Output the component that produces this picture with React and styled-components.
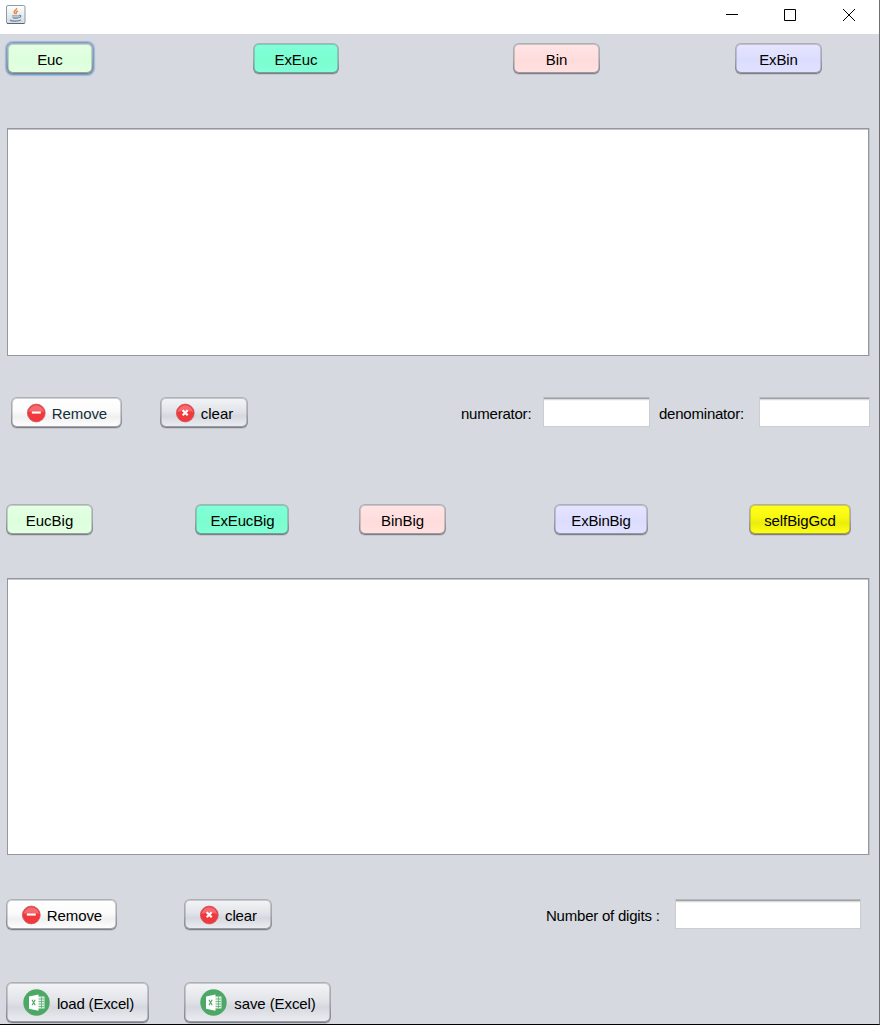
import React from "react";
import styled, { createGlobalStyle } from "styled-components";

const Global = createGlobalStyle`
  * { box-sizing: border-box; }
  html, body { margin: 0; padding: 0; }
  body { width: 880px; height: 1025px; overflow: hidden; font-family: "Liberation Sans", Arial, sans-serif; }
`;

const Window = styled.main`
  width: 880px;
  height: 1025px;
  display: flex;
  flex-direction: column;
  background: #d6d9df;
  border-right: 1px solid #6d6f75;
  border-bottom: 1px solid #000;
`;

const TitleBar = styled.header`
  height: 34px;
  flex: none;
  background: #fff;
  display: flex;
  justify-content: space-between;
  align-items: flex-start;
  padding: 4px 23px 0 5px;
`;

const Controls = styled.div`
  display: flex;
  gap: 46px;
  padding-top: 5px;
  svg { display: block; }
`;

const Row = styled.section`
  display: flex;
  flex: none;
  align-items: flex-start;
  height: ${(p) => p.$h}px;
  margin-top: ${(p) => p.$top}px;
`;

const tones = {
  green: "#e5ffe5, #dcffdc 55%, #e4ffe2",
  mint: "#82ffd8, #7bfdd0 55%, #82ffd6",
  pink: "#ffe5e5, #ffdcdc 55%, #ffe0e0",
  lilac: "#e6e6ff, #dcdcff 55%, #e1e1ff",
  yellow: "#ffff1c, #f8f810 40%, #eded0c 62%, #ffff18",
  white: "#ffffff, #fbfbfb 45%, #f0f0f1 65%, #ffffff",
  silver: "#f3f4f6, #e2e4e9 45%, #d5d8df 62%, #eceef2",
};

const Button = styled.button`
  width: ${(p) => p.$w}px;
  height: ${(p) => p.$h || 31}px;
  margin: 0 0 0 ${(p) => p.$gap}px;
  padding: 1px 0 0 ${(p) => p.$nudge || 0}px;
  flex: none;
  display: flex;
  align-items: center;
  justify-content: center;
  gap: 6px;
  border: 1px solid transparent;
  border-radius: 6px;
  background:
    linear-gradient(${(p) => tones[p.$tone]}) padding-box,
    linear-gradient(#adb0b5, #a4a7ac 50%, #7b7e85) border-box;
  box-shadow:
    inset 0 0 0 1px rgba(100, 104, 112, 0.3),
    inset 0 -1px 0 rgba(70, 74, 82, 0.35),
    ${(p) => (p.$focus ? "0 0 0 1px #739fce, 0 0 1px 2px rgba(115, 159, 206, 0.55)" : "0 1px 0 #c3c6cc")};
  color: ${(p) => p.$color || "#000"};
  font: 15px "Liberation Sans", Arial, sans-serif;
  letter-spacing: ${(p) => p.$track || 0}px;
  white-space: nowrap;
  svg { flex: none; display: block; }
`;

const Output = styled.div`
  width: 862px;
  flex: none;
  height: ${(p) => p.$h}px;
  margin: ${(p) => p.$top}px 0 0 7px;
  background: #fff;
  border: 1px solid #9297a1;
  box-shadow: 1px 0 0 #bfc2ca, inset 0 1px 0 #c3c5cb;
`;

const Label = styled.label`
  margin-left: ${(p) => p.$gap}px;
  width: ${(p) => p.$w}px;
  flex: none;
  line-height: 33px;
  font-size: 15px;
  letter-spacing: -0.22px;
  white-space: nowrap;
  color: #000;
`;

const Field = styled.input`
  width: ${(p) => p.$w}px;
  height: 30px;
  flex: none;
  margin: 0;
  padding: 0 6px;
  background: linear-gradient(#a0a2a6 0 1px, #d9dadc 1px 2px, #f5f5f5 2px 3px, #fff 3px) padding-box #fff;
  border: 1px solid #cbcdd1;
  border-top-color: #b5b8bd;
  outline: none;
`;

function JavaIcon() {
  return (
    <svg width="21" height="21" viewBox="0 0 21 21">
      <defs>
        <linearGradient id="cupBack" x1="0" y1="0" x2="0" y2="1">
          <stop offset="0" stopColor="#fff" />
          <stop offset="1" stopColor="#d6dade" />
        </linearGradient>
      </defs>
      <rect x="1.5" y="1.5" width="18.5" height="18" rx="1.5" fill="url(#cupBack)" stroke="#8b9ba7" />
      <path d="M2 19.5h17.5" stroke="#4e6b80" />
      <path d="M11.6 4c.4 2.2-3.2 2.6-2.4 4.6l1 1.6M12.9 7c-1.9.7-2.2 1.7-1.3 3" fill="none" stroke="#ec8b4a" strokeWidth="1.5" />
      <path d="M6.8 11.2h7.4l-.8 3.2q-2.8 1-5.6 0z" fill="#8ba3b5" />
      <path d="M7.4 12.6h6" stroke="#d8e0e6" strokeWidth=".7" />
      <path d="M14.2 11.4c2.3-.5 2.1 1.9-.5 2.3M5 16c1.5 1.4 9 1.4 11 0" fill="none" stroke="#67879f" strokeWidth="1.2" />
    </svg>
  );
}

function RedIcon({ cross }) {
  return (
    <svg width="20" height="20" viewBox="0 0 20 20">
      <circle cx="10.3" cy="10" r="8.9" fill="#f2383c" stroke="#c45a61" strokeWidth=".8" />
      <path d="M2.5 9a7.9 7.9 0 0 1 15.6 0q-7.8-2.5-15.6 0z" fill="#f4777a" opacity=".8" />
      {cross ? (
        <path d="M7.7 7.2l5 5M12.7 7.2l-5 5" stroke="#fff" strokeWidth="2.2" />
      ) : (
        <path d="M5.8 9.5h9" stroke="#fff" strokeWidth="2.2" />
      )}
    </svg>
  );
}

function ExcelIcon() {
  return (
    <svg width="28" height="28" viewBox="0 0 28 28">
      <circle cx="13.5" cy="13.5" r="13.2" fill="#4da765" />
      <path d="M15 7.5h6.5v12H15z" fill="#dff0e3" />
      <path d="M15 10h6M15 12.5h6M15 15h6M15 17.5h6M18.5 8v11" stroke="#4da765" strokeWidth=".7" />
      <path d="M6 7.5l9.5-2v16.2L6 19.8z" fill="#fff" />
      <path d="M9 10.8l3.2 5.4M12.2 10.8L9 16.2" stroke="#4da765" strokeWidth="1.2" />
    </svg>
  );
}

export default function App() {
  return (
    <>
      <Global />
      <Window>
        <TitleBar>
          <JavaIcon />
          <Controls>
            <svg width="12" height="13" viewBox="0 0 12 13"><path d="M0 5.5h12" stroke="#000" /></svg>
            <svg width="12" height="13" viewBox="0 0 12 13"><path d="M.5.5h11v11H.5z" fill="none" stroke="#000" /></svg>
            <svg width="14" height="13" viewBox="0 0 14 13"><path d="M1 0l12 12M13 0L1 12" stroke="#000" /></svg>
          </Controls>
        </TitleBar>

        <Row $top={9} $h={31}>
          <Button $gap={7} $w={86} $tone="green" $focus $track={-0.1}>Euc</Button>
          <Button $gap={160} $w={86} $tone="mint" $track={-0.1}>ExEuc</Button>
          <Button $gap={174} $w={87} $tone="pink">Bin</Button>
          <Button $gap={135} $w={87} $tone="lilac" $track={-0.1}>ExBin</Button>
        </Row>

        <Output $top={54} $h={228} />

        <Row $top={41} $h={31}>
          <Button $gap={11} $w={111} $tone="white" $color="#123038" $track={-0.1}><RedIcon />Remove</Button>
          <Button $gap={38} $w={88} $tone="silver"><RedIcon cross />clear</Button>
          <Label $gap={213} $w={82}>numerator:</Label>
          <Field $w={107} aria-label="numerator" />
          <Label $gap={9} $w={100}>denominator:</Label>
          <Field $w={111} aria-label="denominator" />
        </Row>

        <Row $top={76} $h={31}>
          <Button $gap={6} $w={87} $tone="green">EucBig</Button>
          <Button $gap={102} $w={94} $tone="mint" $track={-0.15} $nudge={1}>ExEucBig</Button>
          <Button $gap={70} $w={87} $tone="pink" $track={-0.1}>BinBig</Button>
          <Button $gap={108} $w={94} $tone="lilac" $track={-0.2}>ExBinBig</Button>
          <Button $gap={101} $w={102} $tone="yellow" $track={-0.1}>selfBigGcd</Button>
        </Row>

        <Output $top={43} $h={277} />

        <Row $top={44} $h={31}>
          <Button $gap={6} $w={111} $tone="white" $track={-0.1}><RedIcon />Remove</Button>
          <Button $gap={67} $w={88} $tone="silver" $track={-0.1}><RedIcon cross />clear</Button>
          <Label $gap={274} $w={129}>Number of digits :</Label>
          <Field $w={186} aria-label="Number of digits" />
        </Row>

        <Row $top={52} $h={41}>
          <Button $gap={6} $w={143} $h={41} $tone="silver" $track={-0.17} $nudge={2}><ExcelIcon />load (Excel)</Button>
          <Button $gap={35} $w={147} $h={41} $tone="silver" $track={-0.1} $nudge={1}><ExcelIcon />save (Excel)</Button>
        </Row>
      </Window>
    </>
  );
}
